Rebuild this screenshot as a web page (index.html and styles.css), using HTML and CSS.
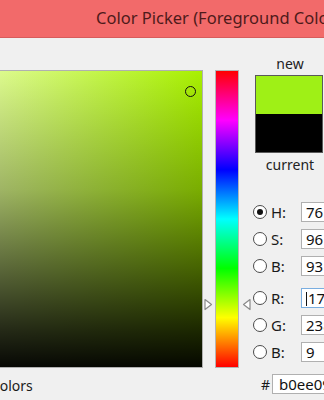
FILE: index.html
```html
<!DOCTYPE html>
<html lang="en">
<head>
  <meta charset="UTF-8">
  <meta name="viewport" content="width=device-width, initial-scale=1.0">
  <title>Color Picker</title>
  <link rel="stylesheet" href="styles.css">
</head>
<body>
  <div class="titlebar">Color Picker (Foreground Color)</div>

  <div class="window">
    <div class="left">
      <div class="field">
        <div class="field-dark"></div>
        <div class="marker"></div>
      </div>
      <div class="webcolors">
        <span class="checkbox"></span>Only Web Colors
      </div>
    </div>

    <div class="hue">
      <div class="hue-bar"></div>
      <svg class="arrow arrow-left" width="9" height="13" viewBox="0 0 9 13">
        <path d="M1 1.5 L7.5 6.5 L1 11.5 Z" fill="#fff" stroke="#8a8a8a" stroke-width="1.2" stroke-linejoin="round"/>
      </svg>
      <svg class="arrow arrow-right" width="9" height="13" viewBox="0 0 9 13">
        <path d="M8 1.5 L1.5 6.5 L8 11.5 Z" fill="#fff" stroke="#8a8a8a" stroke-width="1.2" stroke-linejoin="round"/>
      </svg>
    </div>

    <div class="right">
      <div class="swatch-label">new</div>
      <div class="swatch">
        <div class="swatch-new"></div>
        <div class="swatch-current"></div>
      </div>
      <div class="swatch-label">current</div>

      <div class="fields">
        <div class="group">
          <label class="row"><span class="radio checked"></span><span class="name">H:</span><span class="box">76</span></label>
          <label class="row"><span class="radio"></span><span class="name">S:</span><span class="box">96</span></label>
          <label class="row"><span class="radio"></span><span class="name">B:</span><span class="box">93</span></label>
        </div>
        <div class="group">
          <label class="row"><span class="radio"></span><span class="name">R:</span><span class="box focus"><span class="caret"></span>176</span></label>
          <label class="row"><span class="radio"></span><span class="name">G:</span><span class="box">238</span></label>
          <label class="row"><span class="radio"></span><span class="name">B:</span><span class="box">9</span></label>
        </div>
      </div>

      <div class="hex">
        <span class="hash">#</span><span class="box hex-box">b0ee09</span>
      </div>
    </div>
  </div>
</body>
</html>
```

FILE: styles.css
```css
body {
  margin: 0;
  width: 324px;
  height: 400px;
  overflow: hidden;
  background-color: #f0f0f0;
  font-family: "Noto Sans", "Open Sans", sans-serif;
  color: #1a1a1a;
}
.titlebar {
  height: 37px;
  line-height: 36px;
  padding-left: 96px;
  background-color: #f26a6a;
  border-bottom: 1px solid #d75c5c;
  color: #4e1a1a;
  font-size: 16.5px;
  white-space: nowrap;
  overflow: hidden;
}
.window {
  display: flex;
  padding-top: 32px;
}
.left {
  margin-left: -95px;
  width: 298px;
  flex-shrink: 0;
}
.field {
  position: relative;
  width: 296px;
  height: 296px;
  border: 1px solid #b0b0b0;
  background: linear-gradient(to right, #ffffff 0%, #dcfa8c 32%, #a8f000 100%);
}
.field-dark {
  position: absolute;
  inset: 0;
  background: linear-gradient(to bottom, rgba(0,0,0,0) 0%, rgba(0,0,0,0.28) 40%, rgba(0,0,0,0.58) 66%, rgba(0,0,0,0.84) 88%, rgba(0,0,0,0.97) 100%);
}
.marker {
  position: absolute;
  left: 279px;
  top: 15px;
  width: 9px;
  height: 9px;
  border: 1.5px solid #111;
  border-radius: 50%;
}
.webcolors {
  width: 122px;
  margin-top: 9px;
  text-align: right;
  font-size: 14px;
  line-height: 18px;
  white-space: nowrap;
}
.checkbox {
  display: inline-block;
  width: 12px;
  height: 12px;
  margin-right: 5px;
  border: 1px solid #888;
  background: #fff;
  vertical-align: -2px;
}
.hue {
  position: relative;
  width: 46px;
  margin-left: 1px;
  flex-shrink: 0;
}
.hue-bar {
  width: 22px;
  height: 296px;
  margin: 0 auto;
  border: 1px solid #b5b5b5;
  background: linear-gradient(to bottom, #ff0000 0%, #ff00ff 16.67%, #0000ff 33.33%, #00ffff 50%, #00ff00 66.67%, #ffff00 83.33%, #ff0000 100%);
}
.arrow {
  position: absolute;
  top: 228px;
}
.arrow-left {
  left: 0;
}
.arrow-right {
  right: -1px;
}
.right {
  margin-top: -32px;
  padding-left: 3px;
  width: 130px;
  flex-shrink: 0;
}
.swatch-label {
  width: 70px;
  margin-left: 2px;
  text-align: center;
  font-size: 14px;
  line-height: 16px;
  color: #222;
}
.swatch-label:first-child {
  margin-top: 18px;
}
.swatch {
  width: 66px;
  margin: 3px 0 4px 2px;
  border: 1px solid #5a5a5a;
}
.swatch-new {
  height: 38px;
  background-color: #9ff016;
}
.swatch-current {
  height: 38px;
  background-color: #000;
}
.fields {
  margin-top: 25px;
  display: flex;
  flex-direction: column;
  gap: 5px;
}
.row {
  display: flex;
  align-items: center;
  height: 27px;
}
.radio {
  width: 12px;
  height: 12px;
  border: 1px solid #4a4a4a;
  border-radius: 50%;
  background: #fff;
  position: relative;
  flex-shrink: 0;
}
.radio.checked::after {
  content: "";
  position: absolute;
  left: 3px;
  top: 3px;
  width: 6px;
  height: 6px;
  border-radius: 50%;
  background: #111;
}
.name {
  width: 30px;
  padding-left: 4px;
  font-size: 15px;
}
.box {
  display: block;
  width: 60px;
  height: 18px;
  padding-left: 4px;
  border: 1px solid #b0b0b0;
  background: #fff;
  font-size: 15px;
  line-height: 18px;
  color: #111;
}
.box.focus {
  border-color: #7aaee0;
}
.caret {
  display: inline-block;
  width: 1px;
  height: 14px;
  margin-right: 1px;
  background: #111;
  vertical-align: -2px;
}
.hex {
  display: flex;
  align-items: center;
  margin-top: 9px;
  padding-left: 8px;
}
.hash {
  width: 11px;
  font-size: 14px;
}
.hex-box {
  width: 70px;
  padding-left: 6px;
}
```
